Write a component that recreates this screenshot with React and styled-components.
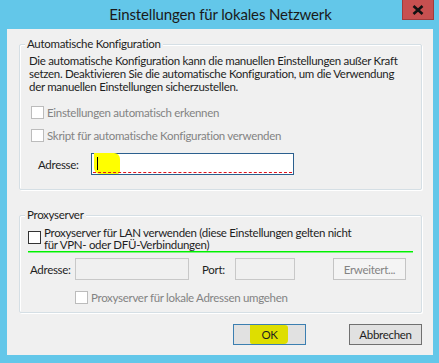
// Imports
import React from "react";
import styled, { createGlobalStyle } from "styled-components";

// Global
const GlobalStyle = createGlobalStyle`
	html, body{
		margin: 0;
		padding: 0;
		background-color: #63c7e9;
	}
	body{
		font-family: Lato, "Liberation Sans", sans-serif;
		font-size: 11.5px;
		letter-spacing: -0.3px;
		color: #1e1e1e;
		white-space: nowrap;
	}
`;

// Checkbox
const Check = ({ disabled, children, left = 0, twoLines }) => (
	<CheckRow $left={ left } $twoLines={ twoLines }>
		<Box $disabled={ disabled } />
		<CheckLabel $disabled={ disabled } $twoLines={ twoLines }>{ children }</CheckLabel>
	</CheckRow>
);

// Component
const App = () => {

	// Return
	return(
		<>
			<GlobalStyle />
			<Window>
				<TitleBar>
					<Title>Einstellungen für lokales Netzwerk</Title>
					<CloseButton>
						<svg width="12" height="10" viewBox="0 0 12 10">
							<path d="M1.5 1 L10.5 9 M10.5 1 L1.5 9" stroke="#111" strokeWidth="2.6" />
						</svg>
					</CloseButton>
				</TitleBar>
				<Panel>
					<Group $height={ 146 } $top={ 15 }>
						<Legend>Automatische Konfiguration</Legend>
						<Description>
							Die automatische Konfiguration kann die manuellen Einstellungen außer Kraft<br />
							setzen. Deaktivieren Sie die automatische Konfiguration, um die Verwendung<br />
							der manuellen Einstellungen sicherzustellen.
						</Description>
						<Spacer $h={ 13 } />
						<Check disabled left={ 11 }>Einstellungen automatisch erkennen</Check>
						<Spacer $h={ 10 } />
						<Check disabled left={ 11 }>Skript für automatische Konfiguration verwenden</Check>
						<Spacer $h={ 11 } />
						<FieldRow>
							<FieldLabel $left={ 18 } $width={ 53 }>Adresse:</FieldLabel>
							<AddressInput>
								<Highlight />
								<Caret />
								<SpellLine />
							</AddressInput>
						</FieldRow>
					</Group>
					<Group $height={ 98 } $top={ 25 }>
						<Legend>Proxyserver</Legend>
						<Spacer $h={ 15 } />
						<Check left={ 8 } twoLines>
							Proxyserver für LAN verwenden (diese Einstellungen gelten nicht<br />
							für VPN- oder DFÜ-Verbindungen)
						</Check>
						<GreenLine />
						<Spacer $h={ 5 } />
						<FieldRow>
							<FieldLabel $left={ 10 } $width={ 45 }>Adresse:</FieldLabel>
							<Field $width={ 114 } />
							<FieldLabel $left={ 13 } $width={ 33 }>Port:</FieldLabel>
							<Field $width={ 60 } />
							<DisabledButton>Erweitert...</DisabledButton>
						</FieldRow>
						<Spacer $h={ 11 } />
						<Check disabled left={ 55 }>Proxyserver für lokale Adressen umgehen</Check>
					</Group>
					<Footer>
						<DialogButton $primary>
							<OkMark />
							<span>OK</span>
						</DialogButton>
						<DialogButton>Abbrechen</DialogButton>
					</Footer>
				</Panel>
			</Window>
		</>
	);

};

// Styled
const Window = styled.div`
	width: 439px;
	height: 363px;
	display: flex;
	flex-direction: column;
	background-color: #63c7e9;
`;

const TitleBar = styled.div`
	position: relative;
	height: 29px;
	display: flex;
	justify-content: center;
	align-items: center;
`;

const Title = styled.div`
	font-size: 15px;
	letter-spacing: -0.15px;
	color: #1a1a1a;
	margin-left: 2px;
	margin-top: -1px;
`;

const CloseButton = styled.div`
	position: absolute;
	top: 0;
	left: 402px;
	width: 32px;
	height: 20px;
	box-sizing: border-box;
	background-color: #c75050;
	border: 1px solid #a03c3c;
	border-top: none;
	display: flex;
	align-items: center;
	justify-content: center;
`;

const Panel = styled.div`
	margin: 0 6px 0 7px;
	height: 326px;
	background-color: #f0f0f0;
	padding: 0 11px 0 12px;
	display: flex;
	flex-direction: column;
`;

const Group = styled.div`
	position: relative;
	margin-top: ${ props => props.$top }px;
	height: ${ props => props.$height }px;
	box-sizing: border-box;
	border: 1px solid #d5dfe5;
	border-radius: 2px;
	box-shadow: inset 1px 1px 0 #ffffff, 1px 1px 0 #ffffff;
	display: flex;
	flex-direction: column;
`;

const Legend = styled.div`
	position: absolute;
	top: -8px;
	left: 5px;
	padding: 0 2px 0 2px;
	background-color: #f0f0f0;
	line-height: 14px;
	color: #1e1e1e;
`;

const Description = styled.div`
	margin: 9px 0 0 9px;
	line-height: 13px;
	color: #1e1e1e;
`;

const Spacer = styled.div`
	height: ${ props => props.$h }px;
	flex: none;
`;

const CheckRow = styled.div`
	display: flex;
	align-items: flex-start;
	margin-left: ${ props => props.$left }px;
	line-height: ${ props => props.$twoLines ? "12px" : "13px" };
`;

const Box = styled.div`
	width: 13px;
	height: 13px;
	box-sizing: border-box;
	flex: none;
	background-color: #ffffff;
	border: 1px solid ${ props => props.$disabled ? "#bcbcbc" : "#333333" };
`;

const CheckLabel = styled.div`
	margin-left: 3px;
	color: ${ props => props.$disabled ? "#838383" : "#1e1e1e" };
	margin-top: ${ props => props.$twoLines ? "-4px" : "0" };
`;

const FieldRow = styled.div`
	display: flex;
	align-items: center;
	height: 22px;
`;

const FieldLabel = styled.div`
	margin-left: ${ props => props.$left }px;
	width: ${ props => props.$width }px;
	flex: none;
	color: #1e1e1e;
`;

const AddressInput = styled.div`
	position: relative;
	width: 203px;
	height: 22px;
	box-sizing: border-box;
	background-color: #ffffff;
	border: 1px solid #2b5f8e;
`;

const Highlight = styled.div`
	position: absolute;
	left: 2px;
	top: -1px;
	width: 26px;
	height: 21px;
	background-color: #ffff00;
	border-radius: 0 6px 3px 6px;
`;

const Caret = styled.div`
	position: absolute;
	left: 5px;
	top: 3px;
	width: 1px;
	height: 13px;
	background-color: #000000;
`;

const SpellLine = styled.div`
	position: absolute;
	left: 1px;
	right: 1px;
	bottom: 1px;
	border-bottom: 1px dashed #e0141e;
`;

const GreenLine = styled.div`
	margin: 0 0 0 8px;
	width: 385px;
	height: 1px;
	background-color: #00f000;
	border-bottom: 1px solid #7cf57c;
`;

const Field = styled.div`
	width: ${ props => props.$width }px;
	height: 22px;
	box-sizing: border-box;
	flex: none;
	background-color: #f0f0f0;
	border: 1px solid #c8c8c8;
`;

const DisabledButton = styled.div`
	margin-left: 38px;
	width: 73px;
	height: 22px;
	box-sizing: border-box;
	flex: none;
	border: 1px solid #c4c4c4;
	background-color: #f4f4f4;
	color: #838383;
	display: flex;
	align-items: center;
	justify-content: center;
`;

const Footer = styled.div`
	display: flex;
	justify-content: flex-end;
	gap: 43px;
	margin-top: 11px;
`;

const DialogButton = styled.div`
	position: relative;
	width: 73px;
	height: 21px;
	box-sizing: border-box;
	background-color: #e1e1e1;
	border: 1px solid ${ props => props.$primary ? "#3c7fb1" : "#707070" };
	display: flex;
	align-items: center;
	justify-content: center;
	color: #1e1e1e;
	span{
		position: relative;
	}
`;

const OkMark = styled.div`
	position: absolute;
	left: 16px;
	top: 0;
	width: 38px;
	height: 19px;
	background-color: #dede00;
	border-radius: 0 3px 4px 2px;
`;

// Export
export default App;
